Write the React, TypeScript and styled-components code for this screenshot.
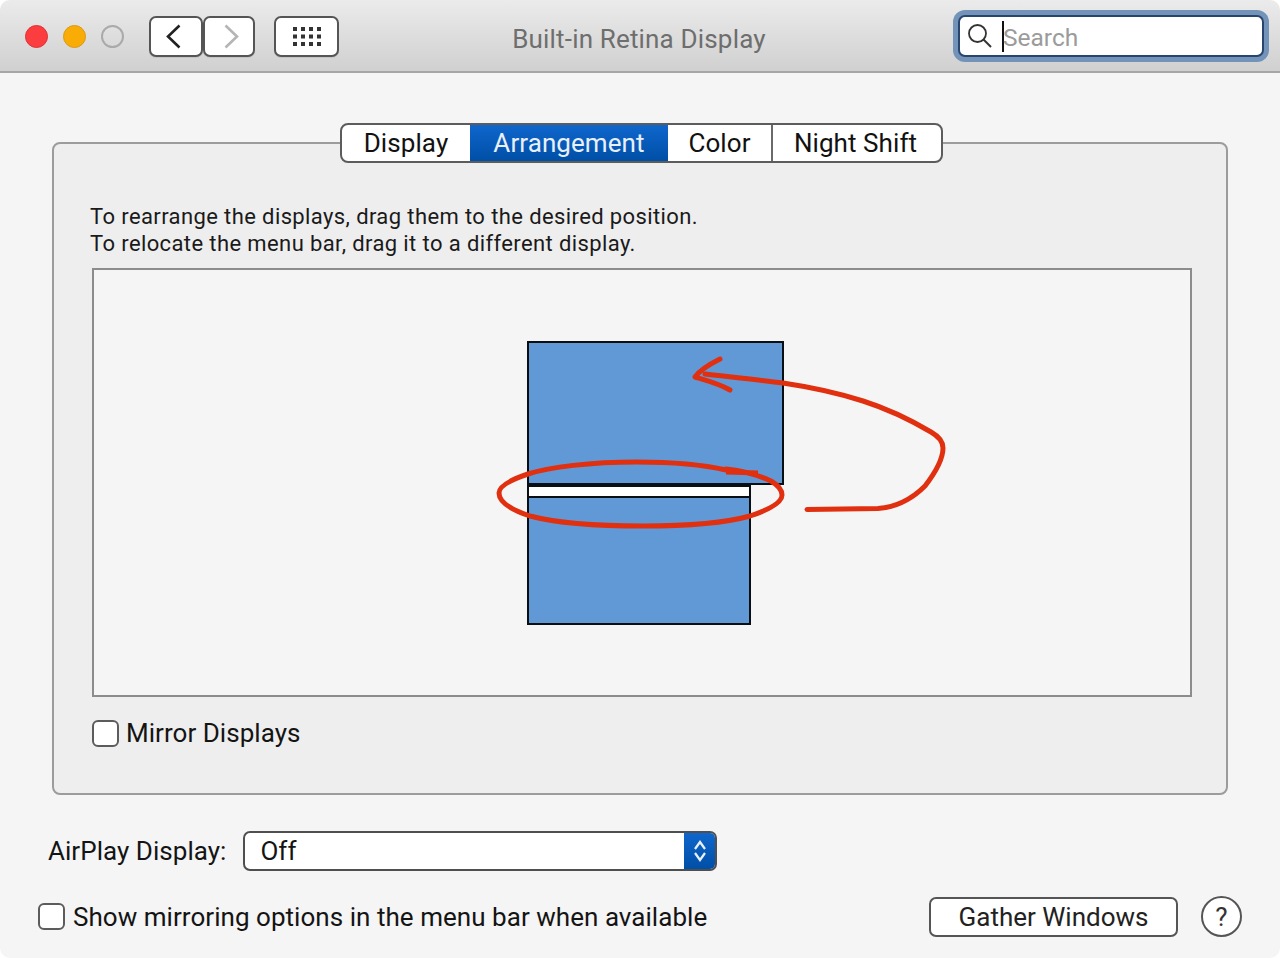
import React, { FC } from 'react'
import styled, { createGlobalStyle } from 'styled-components'

const GlobalStyle = createGlobalStyle`
	html, body {
		margin: 0;
		padding: 0;
		background: #ffffff;
	}
	* {
		box-sizing: border-box;
	}
`

/////////STYLED/////////
const Window = styled.div`
	width: 1280px;
	height: 958px;
	border-radius: 10px;
	overflow: hidden;
	background: #f5f5f5;
	font-family: Roboto, 'Liberation Sans', sans-serif;
	color: #141414;
	display: flex;
	flex-direction: column;
`
const TitleBar = styled.div`
	position: relative;
	flex: none;
	height: 73px;
	display: flex;
	align-items: flex-start;
	padding-top: 16px;
	background: linear-gradient(#ebebeb, #d0d0d0);
	border-bottom: 2px solid #a6a6a6;
`
const Lights = styled.div`
	display: flex;
	gap: 15px;
	padding: 9px 0 0 25px;
	width: 149px;
`
const Light = styled.div<{ $color?: string; $edge: string }>`
	width: 23px;
	height: 23px;
	border-radius: 50%;
	background: ${(p) => p.$color || 'transparent'};
	border: ${(p) => (p.$color ? '1px' : '2px')} solid ${(p) => p.$edge};
`
const ToolButton = styled.div<{ $w: number; $nudge?: number }>`
	width: ${(p) => p.$w}px;
	height: 41px;
	display: flex;
	align-items: center;
	justify-content: center;
	padding-left: ${(p) => Math.max(p.$nudge || 0, 0)}px;
	padding-right: ${(p) => Math.max(-(p.$nudge || 0), 0)}px;
	background: #ffffff;
	border: 2px solid #555555;
	border-radius: 7px;
	box-shadow: 0 1px 0 rgba(0, 0, 0, 0.08);
`
const GridButtonSlot = styled.div`
	margin-left: 19px;
`
const Title = styled.div`
	position: absolute;
	left: 0;
	right: 2px;
	top: 22px;
	text-align: center;
	font-size: 26px;
	letter-spacing: 0.17px;
	line-height: 34px;
	color: #6e6e6e;
`
const SearchRing = styled.div`
	position: absolute;
	left: 953px;
	top: 10px;
	width: 316px;
	height: 52px;
	padding: 5px;
	border-radius: 12px;
	background: #7393b8;
`
const SearchField = styled.div`
	height: 42px;
	display: flex;
	align-items: center;
	padding-left: 7px;
	background: #ffffff;
	border: 2px solid #27456f;
	border-radius: 7px;
`
const Caret = styled.div`
	width: 2px;
	height: 31px;
	margin-left: 9px;
	background: #111111;
`
const SearchHint = styled.span`
	font-size: 24.5px;
	margin: 3px 0 0 -1px;
	color: #9b9b9b;
`
const Main = styled.div`
	flex: 1;
	display: flex;
	flex-direction: column;
	padding: 69px 52px 0;
`
const Group = styled.div`
	position: relative;
	height: 653px;
	padding: 59px 34px 0 36px;
	background: #eeeeee;
	border: 2px solid #9c9c9c;
	border-radius: 8px;
`
const Tabs = styled.div`
	position: absolute;
	left: 286px;
	top: -21px;
	display: flex;
	height: 40px;
	background: #ffffff;
	border: 2px solid #5c5c5c;
	border-radius: 8px;
	overflow: hidden;
`
const Tab = styled.div<{ $w: number; $active?: boolean; $divider?: boolean }>`
	width: ${(p) => p.$w}px;
	display: flex;
	align-items: center;
	justify-content: center;
	padding-right: ${(p) => (p.$divider ? 3 : 0)}px;
	font-size: 26px;
	letter-spacing: 0.08px;
	color: ${(p) => (p.$active ? '#e8f0fa' : '#111111')};
	background: ${(p) => (p.$active ? 'linear-gradient(#0f66cc, #004fa6)' : 'transparent')};
	border-left: ${(p) => (p.$divider ? '2px solid #6a6a6a' : 'none')};
`
const Hint = styled.p`
	margin: 0;
	font-size: 22px;
	letter-spacing: 0.39px;
	line-height: 27px;
	color: #1a1a1a;
`
const Arrangement = styled.div`
	position: relative;
	width: 1100px;
	height: 429px;
	margin: 11px 0 0 2px;
	background: #f5f5f5;
	border: 2px solid #8c8c8c;
`
const Screen = styled.div<{ $x: number; $y: number; $w: number; $h: number }>`
	position: absolute;
	left: ${(p) => p.$x}px;
	top: ${(p) => p.$y}px;
	width: ${(p) => p.$w}px;
	height: ${(p) => p.$h}px;
	background: #6199d6;
	border: 2px solid #0a0f14;
`
const MenuBar = styled.div`
	height: 11px;
	background: #ffffff;
	border-bottom: 2px solid #0a0f14;
`
const Annotation = styled.svg`
	position: absolute;
	left: -94px;
	top: -270px;
	width: 1280px;
	height: 958px;
	pointer-events: none;
`
const CheckRow = styled.div`
	display: flex;
	align-items: center;
	gap: 8px;
`
const MirrorRow = styled(CheckRow)`
	gap: 7px;
	margin: 21px 0 0 2px;
`
const Checkbox = styled.div`
	width: 27px;
	height: 27px;
	background: #ffffff;
	border: 2px solid #5c5c5c;
	border-radius: 6px;
`
const Label = styled.span`
	font-size: 26px;
	letter-spacing: 0.04px;
	line-height: 30px;
`
const Footer = styled.div`
	display: flex;
	flex-direction: column;
	margin: 36px -14px 0 -14px;
`
const AirPlayRow = styled.div`
	display: flex;
	align-items: center;
	gap: 17px;
	height: 40px;
	padding-left: 10px;
`
const Popup = styled.div`
	width: 474px;
	height: 40px;
	display: flex;
	background: #ffffff;
	border: 2px solid #4f4f4f;
	border-radius: 7px;
	overflow: hidden;
`
const PopupValue = styled.div`
	flex: 1;
	padding-left: 15px;
	font-size: 26px;
	line-height: 36px;
`
const Stepper = styled.div`
	width: 31px;
	display: flex;
	align-items: center;
	justify-content: center;
	background: linear-gradient(#0f66cc, #004fa6);
`
const BottomRow = styled.div`
	display: flex;
	align-items: center;
	height: 41px;
	margin-top: 25px;
`
const GatherButton = styled.div`
	width: 249px;
	height: 40px;
	margin-left: auto;
	display: flex;
	align-items: center;
	justify-content: center;
	font-size: 26px;
	color: #222222;
	background: #ffffff;
	border: 2px solid #555555;
	border-radius: 7px;
`
const HelpButton = styled.div`
	width: 41px;
	height: 41px;
	margin-left: 23px;
	padding-top: 1px;
	display: flex;
	align-items: center;
	justify-content: center;
	font-size: 26px;
	color: #333333;
	background: #ffffff;
	border: 2px solid #555555;
	border-radius: 50%;
`
/////////STYLED/////////

const GRID_XS = [0, 8, 16, 24]
const GRID_YS = [0, 7.5, 15]

const App: FC = () => {
	return (
		<Window>
			<GlobalStyle />
			<TitleBar>
				<Lights>
					<Light $color="#fc3d3f" $edge="#e0302f" />
					<Light $color="#f9ac06" $edge="#dc9a10" />
					<Light $edge="#aaaaaa" />
				</Lights>
				<ToolButton $w={54} $nudge={-6}>
					<svg width="15" height="25" viewBox="0 0 15 25" fill="none">
						<path d="M13.5 1.5 L2 12.5 L13.5 23.5" stroke="#222222" strokeWidth="2.6" />
					</svg>
				</ToolButton>
				<ToolButton $w={52} $nudge={4}>
					<svg width="15" height="25" viewBox="0 0 15 25" fill="none">
						<path d="M1.5 1.5 L13 12.5 L1.5 23.5" stroke="#b5b5b5" strokeWidth="2.6" />
					</svg>
				</ToolButton>
				<GridButtonSlot>
					<ToolButton $w={65}>
						<svg width="28" height="19" viewBox="0 0 28 19" fill="#333333">
							{GRID_YS.map((y) =>
								GRID_XS.map((x) => <rect key={`${x}-${y}`} x={x} y={y} width="4" height="4" />),
							)}
						</svg>
					</ToolButton>
				</GridButtonSlot>
				<Title>Built-in Retina Display</Title>
				<SearchRing>
					<SearchField>
						<svg width="26" height="26" viewBox="0 0 26 26" fill="none">
							<circle cx="10.5" cy="10.5" r="8.5" stroke="#333333" strokeWidth="1.8" />
							<path d="M16.5 16.5 L24 24" stroke="#333333" strokeWidth="2" />
						</svg>
						<Caret />
						<SearchHint>Search</SearchHint>
					</SearchField>
				</SearchRing>
			</TitleBar>
			<Main>
				<Group>
					<Tabs>
						<Tab $w={128}>Display</Tab>
						<Tab $w={198} $active>
							Arrangement
						</Tab>
						<Tab $w={103}>Color</Tab>
						<Tab $w={170} $divider>
							Night Shift
						</Tab>
					</Tabs>
					<Hint>
						To rearrange the displays, drag them to the desired position.
						<br />
						To relocate the menu bar, drag it to a different display.
					</Hint>
					<Arrangement>
						<Screen $x={433} $y={71} $w={257} $h={144} />
						<Screen $x={433} $y={215} $w={224} $h={140}>
							<MenuBar />
						</Screen>
						<Annotation viewBox="0 0 1280 958" fill="none">
							<g stroke="#e0300f" strokeWidth="5" strokeLinecap="round" strokeLinejoin="round">
								<path d="M807 509.5 L878 508.5 C898 507 913 498 925 486 C935 473 943 460 943 448 C943 441 938 436 931 432 C909 419 885 408 863 401 C835 392 810 387 783 383 C760 380 730 377 705 374" />
								<path d="M720 359 C708 365 699 371 695 377 C705 380 720 384 730 390" />
								<path d="M726 470 C700 464 670 462 637 462 C590 462 550 467 528 474 C507 481 499 487 499 493 C499 503 512 510 530 516 C560 524 600 526 643 526 C690 526 725 523 750 516 C768 510 782 503 782 495 C782 488 776 484 771 481 C758 475 745 471 726 469" />
								<path d="M726 472 L758 473" strokeLinecap="butt" />
							</g>
						</Annotation>
					</Arrangement>
					<MirrorRow>
						<Checkbox />
						<Label>Mirror Displays</Label>
					</MirrorRow>
				</Group>
				<Footer>
					<AirPlayRow>
						<Label>AirPlay Display:</Label>
						<Popup>
							<PopupValue>Off</PopupValue>
							<Stepper>
								<svg width="12" height="22" viewBox="0 0 12 22" fill="none">
									<path d="M1 9 L6 2 L11 9 M1 13 L6 20 L11 13" stroke="#e8f0fa" strokeWidth="2.2" />
								</svg>
							</Stepper>
						</Popup>
					</AirPlayRow>
					<BottomRow>
						<CheckRow>
							<Checkbox />
							<Label>Show mirroring options in the menu bar when available</Label>
						</CheckRow>
						<GatherButton>Gather Windows</GatherButton>
						<HelpButton>?</HelpButton>
					</BottomRow>
				</Footer>
			</Main>
		</Window>
	)
}

export default App
